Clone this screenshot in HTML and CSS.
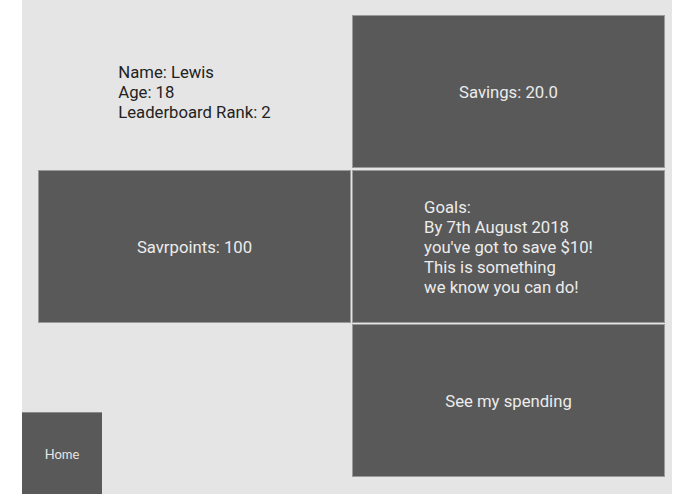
FILE: index.html
```html
<!DOCTYPE html>
<html>
<head>
  <title>Savr</title>
  <link rel="stylesheet" href="styles.css">
</head>
<body>
  <div class="screen">
    <div class="board">
      <div class="cell profile">
        <div class="lines">
          Name: Lewis<br>
          Age: 18<br>
          Leaderboard Rank: 2
        </div>
      </div>
      <div class="cell tile">Savings: 20.0</div>
      <div class="cell tile">Savrpoints: 100</div>
      <div class="cell tile">
        <div class="lines">
          Goals:<br>
          By 7th August 2018<br>
          you've got to save $10!<br>
          This is something<br>
          we know you can do!
        </div>
      </div>
      <div class="cell"></div>
      <div class="cell tile">See my spending</div>
    </div>
    <button class="home">Home</button>
  </div>
</body>
</html>
```

FILE: styles.css
```css
body {
  margin: 0;
  background-color: #ffffff;
  font-family: Roboto, "Liberation Sans", sans-serif;
}

.screen {
  position: relative;
  margin-left: 22px;
  width: 650px;
  height: 494px;
  background-color: #e5e5e5;
  box-sizing: border-box;
  padding: 15px 0 0 16px;
}

.board {
  display: grid;
  grid-template-columns: 313px 313px;
  grid-template-rows: 153px 153px 153px;
  column-gap: 1px;
  row-gap: 1.5px;
}

.cell {
  display: flex;
  justify-content: center;
  align-items: center;
  padding-top: 3px;
  font-size: 16.7px;
  line-height: 20px;
  box-sizing: border-box;
}

.profile {
  color: #222222;
}

.tile {
  background-color: #595959;
  border: 1px solid #9a9a9a;
  color: #ececec;
}

.lines {
  text-align: left;
}

.home {
  position: absolute;
  left: 0;
  bottom: 0;
  width: 80px;
  height: 82px;
  padding: 0;
  border: none;
  border-top: 1px solid #8a8a8a;
  background-color: #595959;
  color: #e6e6e6;
  font-family: Lato, "Open Sans", sans-serif;
  font-size: 13px;
  cursor: pointer;
}
```
